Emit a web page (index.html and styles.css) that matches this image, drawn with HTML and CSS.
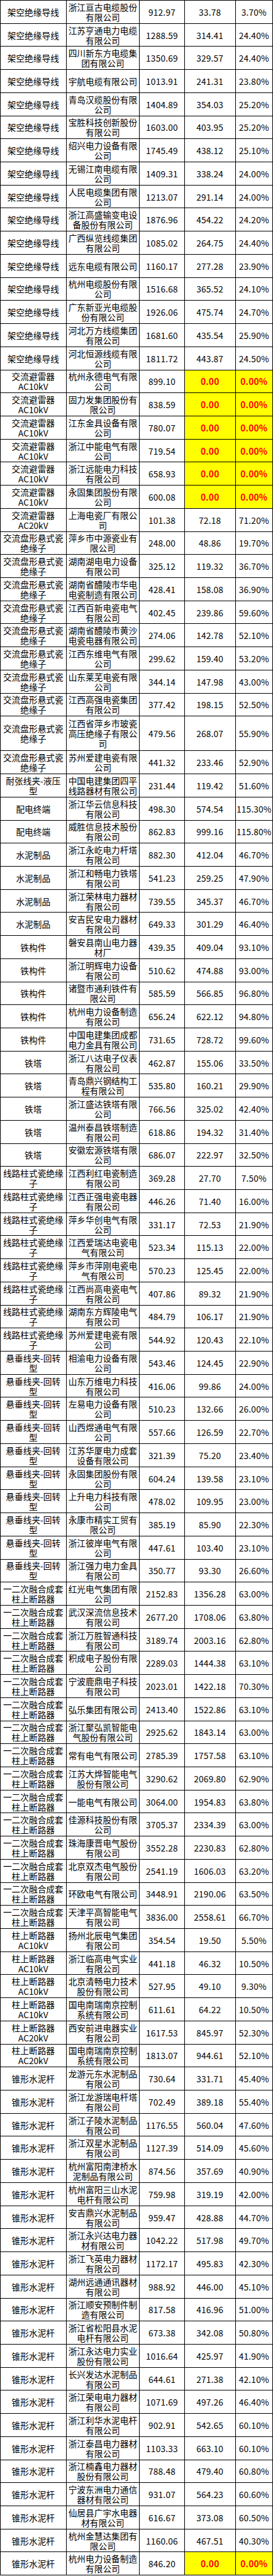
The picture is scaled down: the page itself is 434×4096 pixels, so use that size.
FILE: index.html
```html
<!DOCTYPE html>
<html lang="zh-CN">
<head>
<meta charset="utf-8">
<title>供应商价格对比表</title>
<link rel="stylesheet" href="styles.css">
</head>
<body>
<div class="sheet">
<div class="row"><div class="cell">架空绝缘导线</div><div class="cell">浙江亘古电缆股份<br>有限公司</div><div class="cell num">912.97</div><div class="cell num">33.78</div><div class="cell num">3.70%</div></div>
<div class="row"><div class="cell">架空绝缘导线</div><div class="cell">江苏亨通电力电缆<br>有限公司</div><div class="cell num">1288.59</div><div class="cell num">314.41</div><div class="cell num">24.40%</div></div>
<div class="row"><div class="cell">架空绝缘导线</div><div class="cell">四川新东方电缆集<br>团有限公司</div><div class="cell num">1350.69</div><div class="cell num">329.57</div><div class="cell num">24.40%</div></div>
<div class="row"><div class="cell">架空绝缘导线</div><div class="cell">宇航电缆有限公司</div><div class="cell num">1013.91</div><div class="cell num">241.31</div><div class="cell num">23.80%</div></div>
<div class="row"><div class="cell">架空绝缘导线</div><div class="cell">青岛汉缆股份有限<br>公司</div><div class="cell num">1404.89</div><div class="cell num">354.03</div><div class="cell num">25.20%</div></div>
<div class="row"><div class="cell">架空绝缘导线</div><div class="cell">宝胜科技创新股份<br>有限公司</div><div class="cell num">1603.00</div><div class="cell num">403.95</div><div class="cell num">25.20%</div></div>
<div class="row"><div class="cell">架空绝缘导线</div><div class="cell">绍兴电力设备有限<br>公司</div><div class="cell num">1745.49</div><div class="cell num">438.12</div><div class="cell num">25.10%</div></div>
<div class="row"><div class="cell">架空绝缘导线</div><div class="cell">无锡江南电缆有限<br>公司</div><div class="cell num">1409.31</div><div class="cell num">338.24</div><div class="cell num">24.00%</div></div>
<div class="row"><div class="cell">架空绝缘导线</div><div class="cell">人民电缆集团有限<br>公司</div><div class="cell num">1213.07</div><div class="cell num">291.14</div><div class="cell num">24.00%</div></div>
<div class="row"><div class="cell">架空绝缘导线</div><div class="cell">浙江高盛输变电设<br>备股份有限公司</div><div class="cell num">1876.96</div><div class="cell num">454.22</div><div class="cell num">24.20%</div></div>
<div class="row"><div class="cell">架空绝缘导线</div><div class="cell">广西纵览线缆集团<br>有限公司</div><div class="cell num">1085.02</div><div class="cell num">264.75</div><div class="cell num">24.40%</div></div>
<div class="row"><div class="cell">架空绝缘导线</div><div class="cell">远东电缆有限公司</div><div class="cell num">1160.17</div><div class="cell num">277.28</div><div class="cell num">23.90%</div></div>
<div class="row"><div class="cell">架空绝缘导线</div><div class="cell">杭州电缆股份有限<br>公司</div><div class="cell num">1516.68</div><div class="cell num">365.52</div><div class="cell num">24.10%</div></div>
<div class="row"><div class="cell">架空绝缘导线</div><div class="cell">广东新亚光电缆股<br>份有限公司</div><div class="cell num">1926.06</div><div class="cell num">475.74</div><div class="cell num">24.70%</div></div>
<div class="row"><div class="cell">架空绝缘导线</div><div class="cell">河北万方线缆集团<br>有限公司</div><div class="cell num">1681.60</div><div class="cell num">435.54</div><div class="cell num">25.90%</div></div>
<div class="row"><div class="cell">架空绝缘导线</div><div class="cell">河北恒源线缆有限<br>公司</div><div class="cell num">1811.72</div><div class="cell num">443.87</div><div class="cell num">24.50%</div></div>
<div class="row"><div class="cell">交流避雷器<br>AC10kV</div><div class="cell">杭州永德电气有限<br>公司</div><div class="cell num">899.10</div><div class="cell num hl">0.00</div><div class="cell num hl">0.00%</div></div>
<div class="row"><div class="cell">交流避雷器<br>AC10kV</div><div class="cell">固力发集团股份有<br>限公司</div><div class="cell num">838.59</div><div class="cell num hl">0.00</div><div class="cell num hl">0.00%</div></div>
<div class="row"><div class="cell">交流避雷器<br>AC10kV</div><div class="cell">江东金具设备有限<br>公司</div><div class="cell num">780.07</div><div class="cell num hl">0.00</div><div class="cell num hl">0.00%</div></div>
<div class="row"><div class="cell">交流避雷器<br>AC10kV</div><div class="cell">浙江中能电气有限<br>公司</div><div class="cell num">719.54</div><div class="cell num hl">0.00</div><div class="cell num hl">0.00%</div></div>
<div class="row"><div class="cell">交流避雷器<br>AC10kV</div><div class="cell">浙江远能电力科技<br>有限公司</div><div class="cell num">658.93</div><div class="cell num hl">0.00</div><div class="cell num hl">0.00%</div></div>
<div class="row"><div class="cell">交流避雷器<br>AC10kV</div><div class="cell">永固集团股份有限<br>公司</div><div class="cell num">600.08</div><div class="cell num hl">0.00</div><div class="cell num hl">0.00%</div></div>
<div class="row"><div class="cell">交流避雷器<br>AC20kV</div><div class="cell">上海电瓷厂有限公<br>司</div><div class="cell num">101.38</div><div class="cell num">72.18</div><div class="cell num">71.20%</div></div>
<div class="row"><div class="cell">交流盘形悬式瓷<br>绝缘子</div><div class="cell">萍乡市中源瓷业有<br>限公司</div><div class="cell num">248.00</div><div class="cell num">48.86</div><div class="cell num">19.70%</div></div>
<div class="row"><div class="cell">交流盘形悬式瓷<br>绝缘子</div><div class="cell">湖南湖电电力设备<br>有限公司</div><div class="cell num">325.12</div><div class="cell num">119.32</div><div class="cell num">36.70%</div></div>
<div class="row"><div class="cell">交流盘形悬式瓷<br>绝缘子</div><div class="cell">湖南省醴陵市华电<br>电瓷制造有限公司</div><div class="cell num">428.41</div><div class="cell num">158.08</div><div class="cell num">36.90%</div></div>
<div class="row"><div class="cell">交流盘形悬式瓷<br>绝缘子</div><div class="cell">江西百新电瓷电气<br>有限公司</div><div class="cell num">402.45</div><div class="cell num">239.86</div><div class="cell num">59.60%</div></div>
<div class="row"><div class="cell">交流盘形悬式瓷<br>绝缘子</div><div class="cell">湖南省醴陵市黄沙<br>电瓷电器有限公司</div><div class="cell num">274.06</div><div class="cell num">142.78</div><div class="cell num">52.10%</div></div>
<div class="row"><div class="cell">交流盘形悬式瓷<br>绝缘子</div><div class="cell">江西东维电气有限<br>公司</div><div class="cell num">299.62</div><div class="cell num">159.40</div><div class="cell num">53.20%</div></div>
<div class="row"><div class="cell">交流盘形悬式瓷<br>绝缘子</div><div class="cell">山东莱芜电瓷有限<br>公司</div><div class="cell num">344.14</div><div class="cell num">147.98</div><div class="cell num">43.00%</div></div>
<div class="row"><div class="cell">交流盘形悬式瓷<br>绝缘子</div><div class="cell">江西高强电瓷集团<br>有限公司</div><div class="cell num">377.42</div><div class="cell num">198.15</div><div class="cell num">52.50%</div></div>
<div class="row tall"><div class="cell">交流盘形悬式瓷<br>绝缘子</div><div class="cell">江西省萍乡市玻瓷<br>高压绝缘子有限公<br>司</div><div class="cell num">479.56</div><div class="cell num">268.07</div><div class="cell num">55.90%</div></div>
<div class="row"><div class="cell">交流盘形悬式瓷<br>绝缘子</div><div class="cell">苏州爱建电瓷有限<br>公司</div><div class="cell num">441.32</div><div class="cell num">233.46</div><div class="cell num">52.90%</div></div>
<div class="row"><div class="cell">耐张线夹-液压<br>型</div><div class="cell">中国电建集团四平<br>线路器材有限公司</div><div class="cell num">231.44</div><div class="cell num">119.42</div><div class="cell num">51.60%</div></div>
<div class="row"><div class="cell">配电终端</div><div class="cell">浙江华云信息科技<br>有限公司</div><div class="cell num">498.30</div><div class="cell num">574.54</div><div class="cell num">115.30%</div></div>
<div class="row"><div class="cell">配电终端</div><div class="cell">威胜信息技术股份<br>有限公司</div><div class="cell num">862.83</div><div class="cell num">999.16</div><div class="cell num">115.80%</div></div>
<div class="row"><div class="cell">水泥制品</div><div class="cell">浙江永屹电力杆塔<br>有限公司</div><div class="cell num">882.30</div><div class="cell num">412.04</div><div class="cell num">46.70%</div></div>
<div class="row"><div class="cell">水泥制品</div><div class="cell">浙江和畅电力铁塔<br>有限公司</div><div class="cell num">541.23</div><div class="cell num">259.25</div><div class="cell num">47.90%</div></div>
<div class="row"><div class="cell">水泥制品</div><div class="cell">浙江荣林电力器材<br>有限公司</div><div class="cell num">739.55</div><div class="cell num">345.37</div><div class="cell num">46.70%</div></div>
<div class="row"><div class="cell">水泥制品</div><div class="cell">安吉民安电力器材<br>有限公司</div><div class="cell num">649.33</div><div class="cell num">301.29</div><div class="cell num">46.40%</div></div>
<div class="row"><div class="cell">铁构件</div><div class="cell">磐安县南山电力器<br>材厂</div><div class="cell num">439.35</div><div class="cell num">409.04</div><div class="cell num">93.10%</div></div>
<div class="row"><div class="cell">铁构件</div><div class="cell">浙江明辉电力设备<br>有限公司</div><div class="cell num">510.62</div><div class="cell num">474.88</div><div class="cell num">93.00%</div></div>
<div class="row"><div class="cell">铁构件</div><div class="cell">诸暨市通利铁件有<br>限公司</div><div class="cell num">585.59</div><div class="cell num">566.85</div><div class="cell num">96.80%</div></div>
<div class="row"><div class="cell">铁构件</div><div class="cell">杭州电力设备制造<br>有限公司</div><div class="cell num">656.24</div><div class="cell num">622.12</div><div class="cell num">94.80%</div></div>
<div class="row"><div class="cell">铁构件</div><div class="cell">中国电建集团成都<br>电力金具有限公司</div><div class="cell num">731.65</div><div class="cell num">728.72</div><div class="cell num">99.60%</div></div>
<div class="row"><div class="cell">铁塔</div><div class="cell">浙江八达电子仪表<br>有限公司</div><div class="cell num">462.87</div><div class="cell num">155.06</div><div class="cell num">33.50%</div></div>
<div class="row"><div class="cell">铁塔</div><div class="cell">青岛鼎兴钢结构工<br>程有限公司</div><div class="cell num">535.80</div><div class="cell num">160.21</div><div class="cell num">29.90%</div></div>
<div class="row"><div class="cell">铁塔</div><div class="cell">浙江盛达铁塔有限<br>公司</div><div class="cell num">766.56</div><div class="cell num">325.02</div><div class="cell num">42.40%</div></div>
<div class="row"><div class="cell">铁塔</div><div class="cell">温州泰昌铁塔制造<br>有限公司</div><div class="cell num">618.86</div><div class="cell num">194.32</div><div class="cell num">31.40%</div></div>
<div class="row"><div class="cell">铁塔</div><div class="cell">安徽宏源铁塔有限<br>公司</div><div class="cell num">686.07</div><div class="cell num">222.97</div><div class="cell num">32.50%</div></div>
<div class="row"><div class="cell">线路柱式瓷绝缘<br>子</div><div class="cell">江西利红电瓷制造<br>有限公司</div><div class="cell num">369.28</div><div class="cell num">27.70</div><div class="cell num">7.50%</div></div>
<div class="row"><div class="cell">线路柱式瓷绝缘<br>子</div><div class="cell">江西正强电瓷电器<br>有限公司</div><div class="cell num">446.26</div><div class="cell num">71.40</div><div class="cell num">16.00%</div></div>
<div class="row"><div class="cell">线路柱式瓷绝缘<br>子</div><div class="cell">萍乡华创电气有限<br>公司</div><div class="cell num">331.17</div><div class="cell num">72.53</div><div class="cell num">21.90%</div></div>
<div class="row"><div class="cell">线路柱式瓷绝缘<br>子</div><div class="cell">江西爱瑞达电瓷电<br>气有限公司</div><div class="cell num">523.34</div><div class="cell num">115.13</div><div class="cell num">22.00%</div></div>
<div class="row"><div class="cell">线路柱式瓷绝缘<br>子</div><div class="cell">萍乡市萍刚电瓷电<br>气有限公司</div><div class="cell num">570.23</div><div class="cell num">125.45</div><div class="cell num">22.00%</div></div>
<div class="row"><div class="cell">线路柱式瓷绝缘<br>子</div><div class="cell">江西尚高电瓷电气<br>有限公司</div><div class="cell num">407.86</div><div class="cell num">89.32</div><div class="cell num">21.90%</div></div>
<div class="row"><div class="cell">线路柱式瓷绝缘<br>子</div><div class="cell">湖南东方辉陵电气<br>有限公司</div><div class="cell num">484.79</div><div class="cell num">106.17</div><div class="cell num">21.90%</div></div>
<div class="row"><div class="cell">线路柱式瓷绝缘<br>子</div><div class="cell">苏州爱建电瓷有限<br>公司</div><div class="cell num">544.92</div><div class="cell num">120.43</div><div class="cell num">22.10%</div></div>
<div class="row"><div class="cell">悬垂线夹-回转<br>型</div><div class="cell">相渝电力设备有限<br>公司</div><div class="cell num">543.46</div><div class="cell num">124.45</div><div class="cell num">22.90%</div></div>
<div class="row"><div class="cell">悬垂线夹-回转<br>型</div><div class="cell">山东万维电力科技<br>有限公司</div><div class="cell num">416.06</div><div class="cell num">99.86</div><div class="cell num">24.00%</div></div>
<div class="row"><div class="cell">悬垂线夹-回转<br>型</div><div class="cell">左易电力设备有限<br>公司</div><div class="cell num">510.23</div><div class="cell num">132.66</div><div class="cell num">26.00%</div></div>
<div class="row"><div class="cell">悬垂线夹-回转<br>型</div><div class="cell">山西煜通电气有限<br>公司</div><div class="cell num">557.66</div><div class="cell num">126.59</div><div class="cell num">22.70%</div></div>
<div class="row"><div class="cell">悬垂线夹-回转<br>型</div><div class="cell">江苏华厦电力成套<br>设备有限公司</div><div class="cell num">321.39</div><div class="cell num">75.20</div><div class="cell num">23.40%</div></div>
<div class="row"><div class="cell">悬垂线夹-回转<br>型</div><div class="cell">永固集团股份有限<br>公司</div><div class="cell num">604.24</div><div class="cell num">139.58</div><div class="cell num">23.10%</div></div>
<div class="row"><div class="cell">悬垂线夹-回转<br>型</div><div class="cell">上升电力科技有限<br>公司</div><div class="cell num">478.02</div><div class="cell num">109.95</div><div class="cell num">23.00%</div></div>
<div class="row"><div class="cell">悬垂线夹-回转<br>型</div><div class="cell">永康市精实工贸有<br>限公司</div><div class="cell num">385.19</div><div class="cell num">85.90</div><div class="cell num">22.30%</div></div>
<div class="row"><div class="cell">悬垂线夹-回转<br>型</div><div class="cell">浙江彼岸电气有限<br>公司</div><div class="cell num">447.61</div><div class="cell num">103.40</div><div class="cell num">23.10%</div></div>
<div class="row"><div class="cell">悬垂线夹-回转<br>型</div><div class="cell">浙江强力电力金具<br>有限公司</div><div class="cell num">350.77</div><div class="cell num">93.30</div><div class="cell num">26.60%</div></div>
<div class="row"><div class="cell">一二次融合成套<br>柱上断路器</div><div class="cell">红光电气集团有限<br>公司</div><div class="cell num">2152.83</div><div class="cell num">1356.28</div><div class="cell num">63.00%</div></div>
<div class="row"><div class="cell">一二次融合成套<br>柱上断路器</div><div class="cell">武汉深流信息技术<br>有限公司</div><div class="cell num">2677.20</div><div class="cell num">1708.06</div><div class="cell num">63.80%</div></div>
<div class="row"><div class="cell">一二次融合成套<br>柱上断路器</div><div class="cell">浙江万胜智通科技<br>有限公司</div><div class="cell num">3189.74</div><div class="cell num">2003.16</div><div class="cell num">62.80%</div></div>
<div class="row"><div class="cell">一二次融合成套<br>柱上断路器</div><div class="cell">积成电子股份有限<br>公司</div><div class="cell num">2289.03</div><div class="cell num">1444.38</div><div class="cell num">63.10%</div></div>
<div class="row"><div class="cell">一二次融合成套<br>柱上断路器</div><div class="cell">宁波鹿鼎电子科技<br>有限公司</div><div class="cell num">2023.01</div><div class="cell num">1422.18</div><div class="cell num">70.30%</div></div>
<div class="row"><div class="cell">一二次融合成套<br>柱上断路器</div><div class="cell">弘乐集团有限公司</div><div class="cell num">2413.40</div><div class="cell num">1522.86</div><div class="cell num">63.10%</div></div>
<div class="row"><div class="cell">一二次融合成套<br>柱上断路器</div><div class="cell">浙江聚弘凯智能电<br>气股份有限公司</div><div class="cell num">2925.62</div><div class="cell num">1843.14</div><div class="cell num">63.00%</div></div>
<div class="row"><div class="cell">一二次融合成套<br>柱上断路器</div><div class="cell">常有电气有限公司</div><div class="cell num">2785.39</div><div class="cell num">1757.58</div><div class="cell num">63.10%</div></div>
<div class="row"><div class="cell">一二次融合成套<br>柱上断路器</div><div class="cell">江苏大烨智能电气<br>股份有限公司</div><div class="cell num">3290.62</div><div class="cell num">2069.80</div><div class="cell num">62.90%</div></div>
<div class="row"><div class="cell">一二次融合成套<br>柱上断路器</div><div class="cell">一能电气有限公司</div><div class="cell num">3064.00</div><div class="cell num">1954.83</div><div class="cell num">63.80%</div></div>
<div class="row"><div class="cell">一二次融合成套<br>柱上断路器</div><div class="cell">佳源科技股份有限<br>公司</div><div class="cell num">3705.37</div><div class="cell num">2334.39</div><div class="cell num">63.00%</div></div>
<div class="row"><div class="cell">一二次融合成套<br>柱上断路器</div><div class="cell">珠海康晋电气股份<br>有限公司</div><div class="cell num">3552.28</div><div class="cell num">2230.83</div><div class="cell num">62.80%</div></div>
<div class="row"><div class="cell">一二次融合成套<br>柱上断路器</div><div class="cell">北京双杰电气股份<br>有限公司</div><div class="cell num">2541.19</div><div class="cell num">1606.03</div><div class="cell num">63.20%</div></div>
<div class="row"><div class="cell">一二次融合成套<br>柱上断路器</div><div class="cell">环欧电气有限公司</div><div class="cell num">3448.91</div><div class="cell num">2190.06</div><div class="cell num">63.50%</div></div>
<div class="row"><div class="cell">一二次融合成套<br>柱上断路器</div><div class="cell">天津平高智能电气<br>有限公司</div><div class="cell num">3836.00</div><div class="cell num">2558.61</div><div class="cell num">66.70%</div></div>
<div class="row"><div class="cell">柱上断路器<br>AC10kV</div><div class="cell">扬州北辰电气集团<br>有限公司</div><div class="cell num">354.54</div><div class="cell num">19.50</div><div class="cell num">5.50%</div></div>
<div class="row"><div class="cell">柱上断路器<br>AC10kV</div><div class="cell">浙江临高电气实业<br>有限公司</div><div class="cell num">441.18</div><div class="cell num">46.32</div><div class="cell num">10.50%</div></div>
<div class="row"><div class="cell">柱上断路器<br>AC10kV</div><div class="cell">北京清畅电力技术<br>股份有限公司</div><div class="cell num">527.95</div><div class="cell num">49.10</div><div class="cell num">9.30%</div></div>
<div class="row"><div class="cell">柱上断路器<br>AC10kV</div><div class="cell">国电南瑞南京控制<br>系统有限公司</div><div class="cell num">611.61</div><div class="cell num">64.22</div><div class="cell num">10.50%</div></div>
<div class="row"><div class="cell">柱上断路器<br>AC20kV</div><div class="cell">西安前进电器实业<br>有限公司</div><div class="cell num">1617.53</div><div class="cell num">845.97</div><div class="cell num">52.30%</div></div>
<div class="row"><div class="cell">柱上断路器<br>AC20kV</div><div class="cell">国电南瑞南京控制<br>系统有限公司</div><div class="cell num">1813.07</div><div class="cell num">944.61</div><div class="cell num">52.10%</div></div>
<div class="row"><div class="cell">锥形水泥杆</div><div class="cell">龙游元东水泥制品<br>有限公司</div><div class="cell num">730.64</div><div class="cell num">331.71</div><div class="cell num">45.40%</div></div>
<div class="row"><div class="cell">锥形水泥杆</div><div class="cell">浙江龙游瑞电杆塔<br>有限公司</div><div class="cell num">702.49</div><div class="cell num">389.18</div><div class="cell num">55.40%</div></div>
<div class="row"><div class="cell">锥形水泥杆</div><div class="cell">浙江子陵水泥制品<br>有限公司</div><div class="cell num">1176.55</div><div class="cell num">560.04</div><div class="cell num">47.60%</div></div>
<div class="row"><div class="cell">锥形水泥杆</div><div class="cell">浙江双星水泥制品<br>有限公司</div><div class="cell num">1127.39</div><div class="cell num">514.09</div><div class="cell num">45.60%</div></div>
<div class="row"><div class="cell">锥形水泥杆</div><div class="cell">杭州富阳南津桥水<br>泥制品有限公司</div><div class="cell num">874.56</div><div class="cell num">357.69</div><div class="cell num">40.90%</div></div>
<div class="row"><div class="cell">锥形水泥杆</div><div class="cell">杭州富阳三山水泥<br>电杆有限公司</div><div class="cell num">759.98</div><div class="cell num">319.19</div><div class="cell num">42.00%</div></div>
<div class="row"><div class="cell">锥形水泥杆</div><div class="cell">安吉鼎兴水泥制品<br>有限公司</div><div class="cell num">959.47</div><div class="cell num">428.88</div><div class="cell num">44.70%</div></div>
<div class="row"><div class="cell">锥形水泥杆</div><div class="cell">浙江永兴达电力器<br>材有限公司</div><div class="cell num">1042.22</div><div class="cell num">517.98</div><div class="cell num">49.70%</div></div>
<div class="row"><div class="cell">锥形水泥杆</div><div class="cell">浙江飞英电力器材<br>有限公司</div><div class="cell num">1172.17</div><div class="cell num">495.83</div><div class="cell num">42.30%</div></div>
<div class="row"><div class="cell">锥形水泥杆</div><div class="cell">湖州远通通讯器材<br>有限公司</div><div class="cell num">988.92</div><div class="cell num">446.00</div><div class="cell num">45.10%</div></div>
<div class="row"><div class="cell">锥形水泥杆</div><div class="cell">浙江顺安预制件制<br>造有限公司</div><div class="cell num">817.58</div><div class="cell num">416.96</div><div class="cell num">51.00%</div></div>
<div class="row"><div class="cell">锥形水泥杆</div><div class="cell">浙江省松阳县水泥<br>电杆有限公司</div><div class="cell num">673.38</div><div class="cell num">342.08</div><div class="cell num">50.80%</div></div>
<div class="row"><div class="cell">锥形水泥杆</div><div class="cell">浙江永达电力实业<br>股份有限公司</div><div class="cell num">1016.64</div><div class="cell num">425.97</div><div class="cell num">41.90%</div></div>
<div class="row"><div class="cell">锥形水泥杆</div><div class="cell">长兴发达水泥制品<br>有限公司</div><div class="cell num">644.61</div><div class="cell num">271.38</div><div class="cell num">42.10%</div></div>
<div class="row"><div class="cell">锥形水泥杆</div><div class="cell">浙江荣电电力器材<br>有限公司</div><div class="cell num">1071.69</div><div class="cell num">497.26</div><div class="cell num">46.40%</div></div>
<div class="row"><div class="cell">锥形水泥杆</div><div class="cell">浙江利华水泥电杆<br>有限公司</div><div class="cell num">902.91</div><div class="cell num">542.65</div><div class="cell num">60.10%</div></div>
<div class="row"><div class="cell">锥形水泥杆</div><div class="cell">浙江泰昌电力器材<br>有限公司</div><div class="cell num">1103.33</div><div class="cell num">663.10</div><div class="cell num">60.10%</div></div>
<div class="row"><div class="cell">锥形水泥杆</div><div class="cell">浙江楠鑫电力器材<br>股份有限公司</div><div class="cell num">788.48</div><div class="cell num">479.40</div><div class="cell num">60.80%</div></div>
<div class="row"><div class="cell">锥形水泥杆</div><div class="cell">宁波东洲电力通信<br>器材有限公司</div><div class="cell num">931.07</div><div class="cell num">564.23</div><div class="cell num">60.60%</div></div>
<div class="row"><div class="cell">锥形水泥杆</div><div class="cell">仙居县广宇水电器<br>材有限公司</div><div class="cell num">616.67</div><div class="cell num">373.08</div><div class="cell num">60.50%</div></div>
<div class="row"><div class="cell">锥形水泥杆</div><div class="cell">杭州金慧达集团有<br>限公司</div><div class="cell num">1160.06</div><div class="cell num">467.51</div><div class="cell num">40.30%</div></div>
<div class="row"><div class="cell">锥形水泥杆</div><div class="cell">杭州电力设备制造<br>有限公司</div><div class="cell num">846.20</div><div class="cell num hl">0.00</div><div class="cell num hl">0.00%</div></div>
</div>
</body>
</html>
```
FILE: styles.css
```css
html, body {
  margin: 0;
  padding: 0;
  background: #ffffff;
}

.sheet {
  width: 434px;
  box-sizing: border-box;
  border-top: 1px solid #000000;
  border-left: 1px solid #000000;
  font-family: "Noto Sans CJK SC", "Noto Sans", sans-serif;
  font-size: 13.7px;
  line-height: 16px;
  color: #000000;
}

.row {
  display: grid;
  grid-template-columns: 104.6px 116.6px 71.6px 80.8px 59.4px;
  height: 36.72px;
}

.row.tall {
  height: 55.08px;
}

.cell {
  box-sizing: border-box;
  border-right: 1px solid #000000;
  border-bottom: 1px solid #000000;
  display: flex;
  align-items: center;
  justify-content: center;
  text-align: center;
  white-space: nowrap;
  padding: 0 1px;
}

.num {
  font-variant-numeric: tabular-nums;
  letter-spacing: 0.2px;
}

.hl {
  background: #ffff00;
  color: #ff0000;
  font-weight: bold;
}
```
